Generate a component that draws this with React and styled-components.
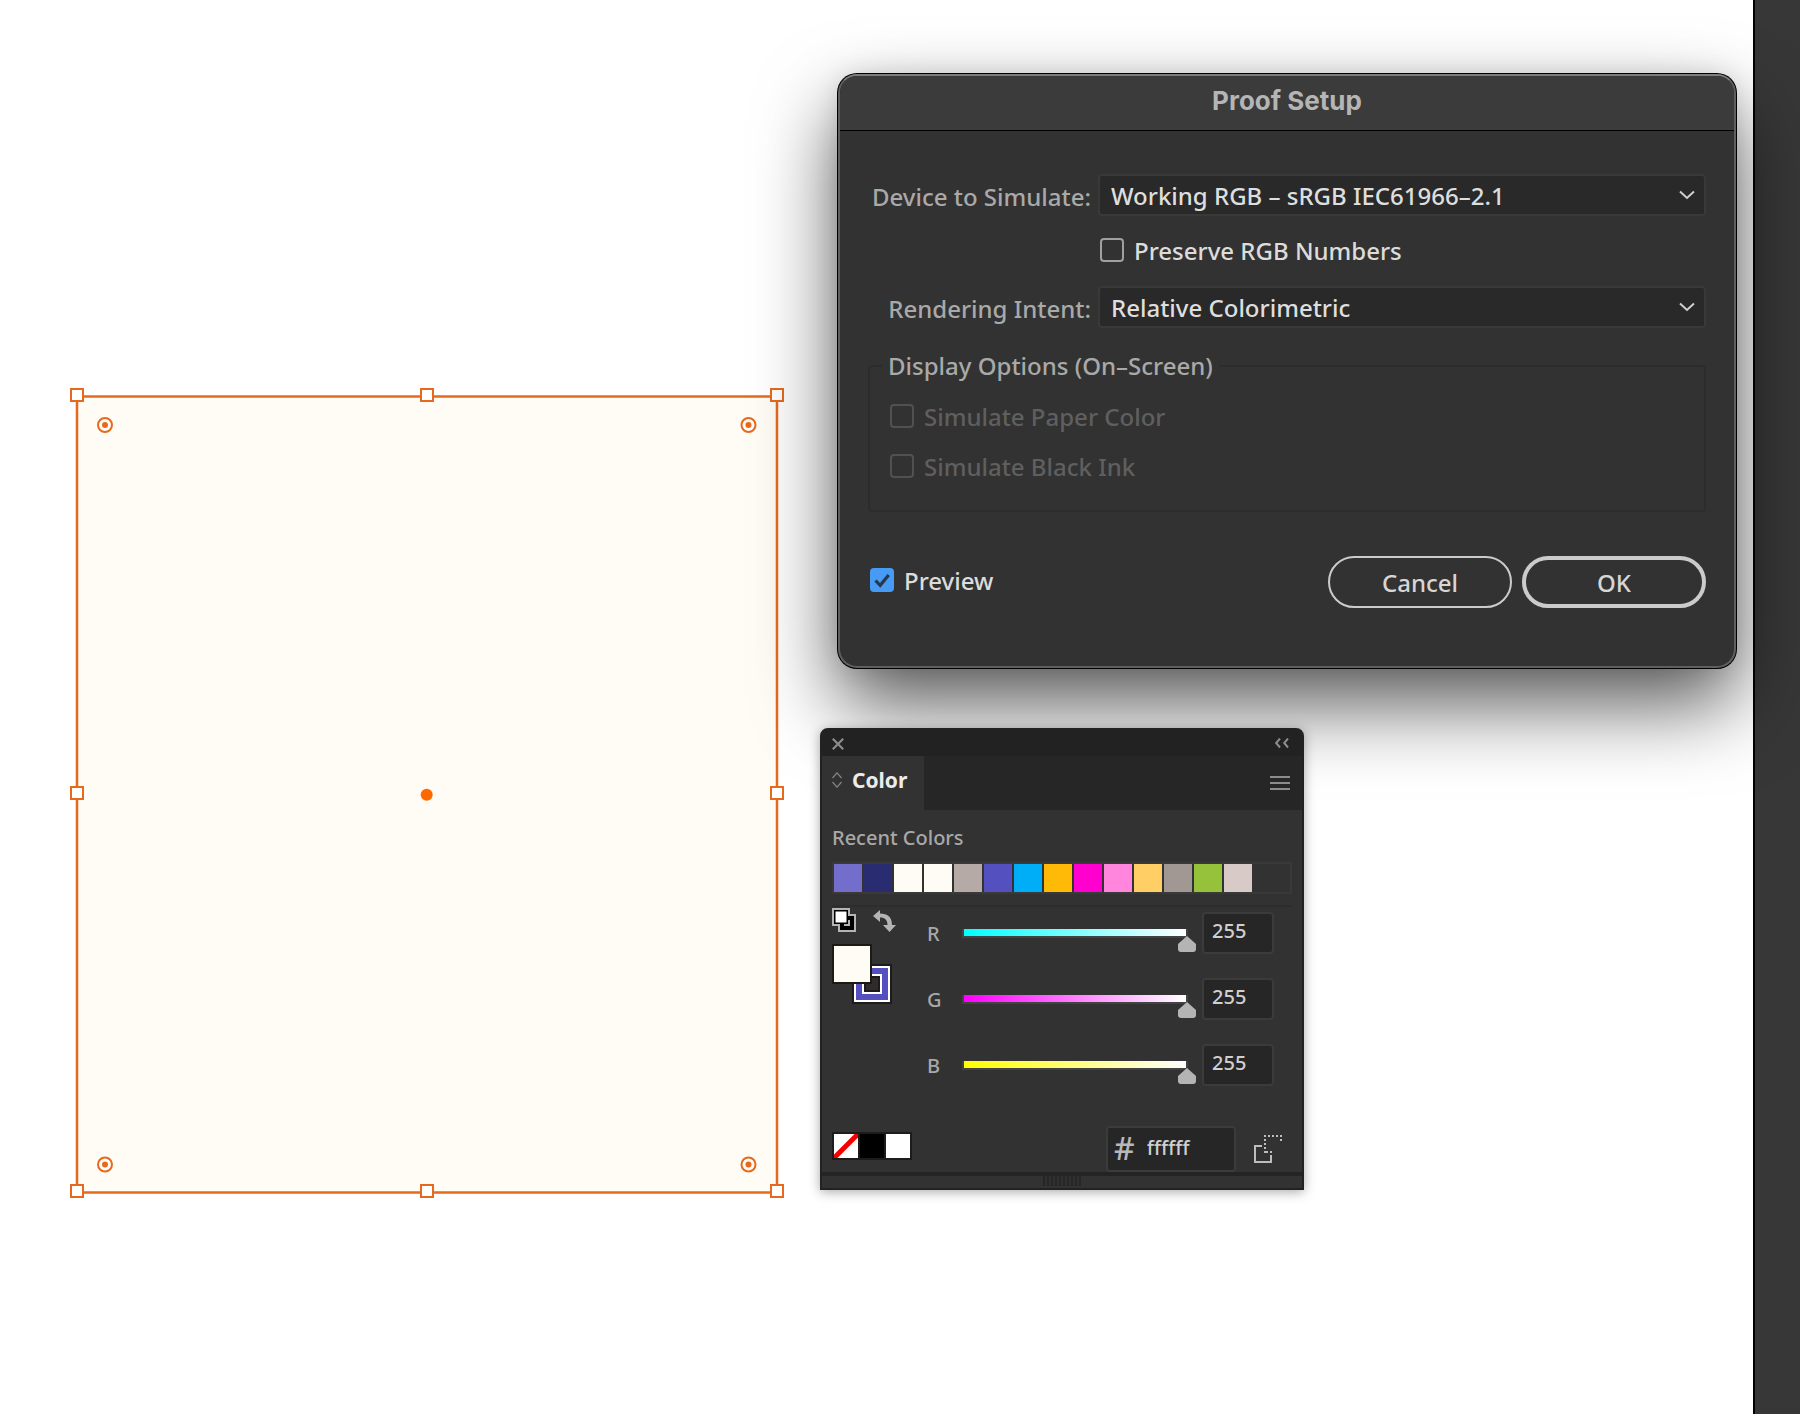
import React, { useState } from "react";
import styled, { createGlobalStyle, css } from "styled-components";

const GlobalStyle = createGlobalStyle`
  *, *::before, *::after { box-sizing: border-box; }
  body {
    margin: 0;
    background: #fff;
    font-family: "Noto Sans", "Open Sans", "Liberation Sans", sans-serif;
  }
  button, input, select, fieldset, legend { font: inherit; margin: 0; }
`;

const Workspace = styled.main`
  position: relative;
  display: flex;
  min-height: 100vh;
  overflow: hidden;
`;

const Artboard = styled.section`
  flex: 1;
  background: #fff;
`;

const DockEdge = styled.aside`
  width: 47px;
  background: #373737;
  border-left: 2px solid #000;
`;

const Selection = styled.svg`
  position: absolute;
  left: 70px;
  top: 388px;
  display: block;
`;

/* ---------- Proof Setup dialog ---------- */

const Dialog = styled.form`
  position: absolute;
  left: 838px;
  top: 74px;
  width: 898px;
  border: 2px solid #5f5f5f;
  border-top-color: #7d7d7d;
  border-radius: 19px;
  background: #323232;
  box-shadow: 0 0 0 1px #000, 0 36px 80px rgba(0, 0, 0, 0.66), 0 0 24px rgba(0, 0, 0, 0.1);
  font-size: 24px;
  font-weight: 500;
  line-height: 34px;
  color: #dcdcdc;
`;

const DialogTitle = styled.h1`
  margin: 0;
  height: 55px;
  padding-bottom: 5px;
  display: flex;
  align-items: center;
  justify-content: center;
  border-bottom: 1px solid #000;
  border-radius: 17px 17px 0 0;
  background: #3b3b3b;
  color: #b5b5b5;
  font: 700 26px/30px Inter, "Liberation Sans", sans-serif;
`;

const DialogBody = styled.div`
  padding: 43px 28px 58px 28px;
`;

const FormGrid = styled.div`
  display: grid;
  grid-template-columns: 223px 1fr;
  column-gap: 7px;
  row-gap: 22px;
  align-items: center;
`;

const FieldLabel = styled.label`
  padding-top: 3px;
  text-align: right;
  color: #a9a9a9;
  white-space: nowrap;
`;

const SelectWrap = styled.div`
  position: relative;
  display: grid;

  svg {
    position: absolute;
    right: 11px;
    top: 15px;
    pointer-events: none;
  }
`;

const Select = styled.select`
  appearance: none;
  width: 100%;
  height: 42px;
  padding: 1px 40px 0 11px;
  border: 2px solid #393939;
  border-radius: 4px;
  background: #292929;
  color: #dedede;
  line-height: 34px;
`;

const CheckLabel = styled.label`
  display: flex;
  align-items: center;
  gap: 10px;
  height: ${(p) => (p.$compact ? "26px" : "34px")};
  padding-left: 2px;
  ${(p) => p.$column && css`grid-column: ${p.$column};`}
  color: ${(p) => (p.$disabled ? "#5f5f5f" : "#dcdcdc")};
`;

const CheckInput = styled.input`
  appearance: none;
  flex: none;
  width: 24px;
  height: 24px;
  border: 2px solid #a0a0a0;
  border-radius: 4px;
  background: transparent;

  &:disabled { border-color: #515151; }
  &:checked {
    border-color: #479bf5;
    background: #479bf5;
  }
`;

const CheckBox = styled.span`
  position: relative;
  display: grid;
  margin-bottom: 2px;

  svg {
    position: absolute;
    inset: 0;
    pointer-events: none;
  }
`;

const OptionsGroup = styled.fieldset`
  min-width: 0;
  margin-top: 21px;
  padding: 17px 12px 26px;
  border: 2px solid #2c2c2c;
  border-radius: 4px;
`;

const OptionsLegend = styled.legend`
  padding: 0 6px;
  color: #a9a9a9;
`;

const OptionsList = styled.div`
  display: flex;
  flex-direction: column;
  gap: 16px;
  padding-left: 6px;
`;

const DialogFooter = styled.div`
  display: flex;
  align-items: center;
  justify-content: space-between;
  margin-top: 44px;

  > label { margin-bottom: 2px; }
`;

const ButtonRow = styled.div`
  display: flex;
  gap: 10px;
`;

const PillButton = styled.button`
  width: 184px;
  height: 52px;
  padding: 2px 0 0;
  border: ${(p) => (p.$primary ? "4px" : "2px")} solid #cbcbcb;
  border-radius: 26px;
  background: transparent;
  color: #d6d6d6;
`;

/* ---------- Color panel ---------- */

const Panel = styled.section`
  position: absolute;
  left: 820px;
  top: 728px;
  width: 484px;
  border: 2px solid #222;
  border-radius: 8px 8px 0 0;
  background: #323232;
  box-shadow: 0 2px 12px rgba(0, 0, 0, 0.34);
  color: #b0b0b0;
  font-size: 20px;
  font-weight: 500;
  line-height: 28px;
`;

const PanelBar = styled.header`
  display: flex;
  align-items: center;
  justify-content: space-between;
  height: 26px;
  padding: 2px 13px 0 10px;
  border-radius: 6px 6px 0 0;
  background: #222;
`;

const IconButton = styled.button`
  display: grid;
  padding: 0;
  border: 0;
  background: none;
  color: ${(p) => p.$color || "#8c8c8c"};
`;

const TabStrip = styled.div`
  display: flex;
  align-items: center;
  justify-content: space-between;
  height: 54px;
  padding-right: 12px;
  background: #262626;
`;

const Tab = styled.button`
  display: flex;
  align-items: center;
  gap: 10px;
  align-self: stretch;
  width: 102px;
  padding: 0 0 6px 10px;
  border: 0;
  background: #323232;
  color: #ececec;
  font-size: 21px;
  font-weight: 700;
`;

const PanelBody = styled.div`
  padding: 14px 10px 0;
`;

const SectionTitle = styled.h2`
  margin: 0 0 10px;
  font-size: 20px;
  font-weight: 500;
  line-height: 28px;
  color: #a8a8a8;
`;

const SwatchStrip = styled.div`
  display: flex;
  gap: 2px;
  padding: 0;
  border: 2px solid #393939;
`;

const Swatch = styled.button`
  width: 28px;
  height: 28px;
  padding: 0;
  border: 0;
  background: ${(p) => p.$color};
`;

const Divider = styled.hr`
  height: 2px;
  margin: 11px 0 0;
  border: 0;
  background: #2d2d2d;
`;

const Mixer = styled.div`
  display: grid;
  grid-template-columns: 95px 1fr;
`;

const ToolColumn = styled.div`
  display: flex;
  flex-direction: column;
  gap: 12px;
  padding-top: 1px;
`;

const ToolRow = styled.div`
  display: flex;
  gap: 17px;
`;

const Channels = styled.div`
  display: flex;
  flex-direction: column;
  gap: 24px;
  padding: 5px 18px 0 0;
`;

const ChannelRow = styled.div`
  display: grid;
  grid-template-columns: 28px 1fr 72px;
  align-items: start;
  height: 42px;
`;

const ChannelLabel = styled.label`
  line-height: 44px;
  color: #a8a8a8;
`;

const ChannelRange = styled.input`
  appearance: none;
  width: calc(100% - 6px);
  height: 23px;
  margin-top: 17px;
  background:
    linear-gradient(90deg, ${(p) => p.$from}, #fff) 9px 0 / calc(100% - 19px) 7px no-repeat,
    linear-gradient(#424242, #424242) 7px 0 / calc(100% - 15px) 9px no-repeat;

  &::-webkit-slider-runnable-track {
    height: 23px;
    background: transparent;
  }
  &::-webkit-slider-thumb {
    appearance: none;
    width: 18px;
    height: 16px;
    margin-top: 7px;
    border-radius: 0 0 3px 3px;
    background: #b4b4b4;
    clip-path: polygon(50% 0, 100% 50%, 100% 100%, 0 100%, 0 50%);
  }
`;

const fieldBox = css`
  border: 2px solid #3b3b3b;
  border-radius: 4px;
  background: #262626;
  color: #cfcfcf;
`;

const ValueInput = styled.input`
  ${fieldBox}
  width: 72px;
  height: 42px;
  padding: 0 0 6px 8px;
`;

const PanelFooter = styled.div`
  display: flex;
  align-items: center;
  padding: 0 8px 0 0;
  margin-top: 40px;
`;

const QuickSwatches = styled.div`
  display: flex;
  gap: 2px;
  padding: 2px;
  margin-right: auto;
  margin-bottom: 6px;
  background: #1c1c1c;
`;

const QuickSwatch = styled.button`
  display: grid;
  width: 24px;
  height: 24px;
  padding: 0;
  border: 0;
  background: ${(p) => p.$color};
`;

const HexField = styled.label`
  ${fieldBox}
  display: flex;
  align-items: center;
  width: 130px;
  height: 46px;
  margin-right: 18px;
  padding-left: 6px;
  gap: 12px;
`;

const HexSign = styled.span`
  font-size: 32px;
  line-height: 42px;
  padding-bottom: 2px;
  color: #b8b8b8;
`;

const HexInput = styled.input`
  min-width: 0;
  flex: 1;
  padding: 0 0 2px;
  border: 0;
  background: transparent;
  color: #cfcfcf;
`;

const ResizeBar = styled.div`
  display: flex;
  justify-content: center;
  height: 16px;
  border-top: 4px solid #242424;
`;

const Grip = styled.span`
  width: 38px;
  height: 10px;
  background: repeating-linear-gradient(90deg, #262626 0 2px, #303030 2px 4px);
`;

const ORANGE = "#e66a1e";

function SelectionOutline() {
  const xs = [7, 357, 707];
  const ys = [7, 405, 803];
  return (
    <Selection width="714" height="811" viewBox="0 0 714 811" aria-label="Selected rectangle">
      <rect x="7" y="8.5" width="700" height="796" fill="#fffcf5" stroke={ORANGE} strokeWidth="2.5" />
      {xs.map((x) =>
        ys.map((y) =>
          x === 357 && y === 405 ? null : (
            <rect key={`${x}-${y}`} x={x - 6} y={y - 6} width="12" height="12" fill="#fff" stroke={ORANGE} strokeWidth="2" />
          )
        )
      )}
      {[35, 678.5].map((x) =>
        [37, 776.5].map((y) => (
          <g key={`${x}-${y}`}>
            <circle cx={x} cy={y} r="7" fill="#fffcf5" stroke={ORANGE} strokeWidth="2" />
            <circle cx={x} cy={y} r="3" fill={ORANGE} />
          </g>
        ))
      )}
      <circle cx="356.7" cy="406.7" r="6" fill="#ff6800" />
    </Selection>
  );
}

function Dropdown({ id, options }) {
  return (
    <SelectWrap>
      <Select id={id}>
        {options.map((o) => (
          <option key={o}>{o}</option>
        ))}
      </Select>
      <svg width="16" height="12" viewBox="0 0 16 12" fill="none" stroke="#cfcfcf" strokeWidth="2">
        <path d="M1 2.5 8 9l7-6.5" />
      </svg>
    </SelectWrap>
  );
}

function Check({ label, disabled, compact, column, initial = false }) {
  const [on, setOn] = useState(initial);
  return (
    <CheckLabel $disabled={disabled} $compact={compact} $column={column}>
      <CheckBox>
        <CheckInput type="checkbox" checked={on} disabled={disabled} onChange={() => setOn(!on)} />
        {on && (
          <svg width="24" height="24" viewBox="0 0 24 24" fill="none" stroke="#283848" strokeWidth="3.2">
            <path d="m5.5 12.5 4.7 4.8L18.7 7" />
          </svg>
        )}
      </CheckBox>
      {label}
    </CheckLabel>
  );
}

function ProofSetup() {
  return (
    <Dialog onSubmit={(e) => e.preventDefault()}>
      <DialogTitle>Proof Setup</DialogTitle>
      <DialogBody>
        <FormGrid>
          <FieldLabel htmlFor="device">Device to Simulate:</FieldLabel>
          <Dropdown id="device" options={["Working RGB – sRGB IEC61966–2.1"]} />
          <Check label="Preserve RGB Numbers" compact column={2} />
          <FieldLabel htmlFor="intent">Rendering Intent:</FieldLabel>
          <Dropdown id="intent" options={["Relative Colorimetric"]} />
        </FormGrid>
        <OptionsGroup>
          <OptionsLegend>Display Options (On–Screen)</OptionsLegend>
          <OptionsList>
            <Check label="Simulate Paper Color" disabled />
            <Check label="Simulate Black Ink" disabled />
          </OptionsList>
        </OptionsGroup>
        <DialogFooter>
          <Check label="Preview" initial />
          <ButtonRow>
            <PillButton type="button">Cancel</PillButton>
            <PillButton type="submit" $primary>OK</PillButton>
          </ButtonRow>
        </DialogFooter>
      </DialogBody>
    </Dialog>
  );
}

const RECENT = [
  "#736dcb", "#292c70", "#fffcf5", "#fffcf5", "#b5aaa5", "#5450bf", "#00aef8",
  "#ffba08", "#ff00cf", "#ff86dc", "#ffcf66", "#a19793", "#95c23a", "#d8cac6",
];

const CHANNELS = [
  { name: "R", from: "#00ffff" },
  { name: "G", from: "#ff00ff" },
  { name: "B", from: "#ffff00" },
];

function Channel({ name, from }) {
  const [value, setValue] = useState(255);
  const update = (e) => setValue(e.target.value);
  return (
    <ChannelRow>
      <ChannelLabel htmlFor={`range-${name}`}>{name}</ChannelLabel>
      <ChannelRange id={`range-${name}`} type="range" min="0" max="255" value={value} onChange={update} $from={from} />
      <ValueInput aria-label={`${name} value`} value={value} onChange={update} />
    </ChannelRow>
  );
}

function ColorPanel() {
  const [hex, setHex] = useState("ffffff");
  return (
    <Panel>
      <PanelBar>
        <IconButton aria-label="Close">
          <svg width="12" height="12" viewBox="0 0 12 12" stroke="currentColor" strokeWidth="2.2">
            <path d="m.8.8 10.4 10.4M11.2.8.8 11.2" />
          </svg>
        </IconButton>
        <IconButton aria-label="Collapse">
          <svg width="14" height="12" viewBox="0 0 14 12" fill="none" stroke="currentColor" strokeWidth="2">
            <path d="M5 .5 1.2 5 5 9.500M13 .5 9.200 5 13 9.500" />
          </svg>
        </IconButton>
      </PanelBar>
      <TabStrip>
        <Tab>
          <svg width="10" height="16" viewBox="0 0 10 16" fill="none" stroke="#858585" strokeWidth="1.2">
            <path d="M.5 6 5 .8 9.5 6M.5 10 5 15.2 9.5 10" />
          </svg>
          Color
        </Tab>
        <IconButton aria-label="Panel menu">
          <svg width="20" height="14" viewBox="0 0 20 14" fill="currentColor">
            <path d="M0 0h20v2H0zM0 6h20v2H0zM0 12h20v2H0z" />
          </svg>
        </IconButton>
      </TabStrip>
      <PanelBody>
        <SectionTitle>Recent Colors</SectionTitle>
        <SwatchStrip>
          {RECENT.map((c, i) => (
            <Swatch key={i} $color={c} aria-label={c} />
          ))}
        </SwatchStrip>
        <Divider />
        <Mixer>
          <ToolColumn>
            <ToolRow>
              <IconButton aria-label="Default fill and stroke">
                <svg width="24" height="24" viewBox="0 0 24 24">
                  <path d="M0 0h18v18H0z" fill="#b4b4b4" />
                  <path d="M6 6h18v18H6z" fill="#b4b4b4" />
                  <path d="M8 8h14v14H8z" fill="#000" />
                  <path d="M12 17h5v-5" fill="none" stroke="#b4b4b4" strokeWidth="2" />
                  <path d="M2 2h14v14H2z" fill="#000" />
                  <path d="M3.5 3.5h11v11h-11z" fill="#fff" />
                </svg>
              </IconButton>
              <IconButton aria-label="Swap fill and stroke" $color="#b4b4b4">
                <svg width="23" height="24" viewBox="0 0 23 24" fill="currentColor">
                  <path d="M0 8 7 2v3.500C14.500 5.500 19 9 19 17h4l-6.500 7L10 17h4.500c0-5-2.500-7.500-7.500-7.500V14z" />
                </svg>
              </IconButton>
            </ToolRow>
            <IconButton aria-label="Fill and stroke">
              <svg width="60" height="60" viewBox="0 0 60 60">
                <path d="M20 20h40v40H20z" fill="#1c1a1a" />
                <path d="M22 22h36v36H22z" fill="#fff" />
                <path d="M24 24h32v32H24z" fill="#5450bf" />
                <path d="M30 30h20v20H30z" fill="#fff" />
                <path d="M32 32h16v16H32z" fill="#1c1a1a" />
                <path d="M34 34h12v12H34z" fill="#302a28" />
                <path d="M0 0h40v40H0z" fill="#1c1a16" />
                <path d="M2 2h36v36H2z" fill="#fffcf5" />
              </svg>
            </IconButton>
          </ToolColumn>
          <Channels>
            {CHANNELS.map((c) => (
              <Channel key={c.name} {...c} />
            ))}
          </Channels>
        </Mixer>
        <PanelFooter>
          <QuickSwatches>
            <QuickSwatch $color="#fff" aria-label="None">
              <svg width="24" height="24" viewBox="0 0 24 24">
                <path d="M0 24v-3.500L20.500 0H24v3.500L3.500 24z" fill="#f40000" />
              </svg>
            </QuickSwatch>
            <QuickSwatch $color="#000" aria-label="Black" />
            <QuickSwatch $color="#fff" aria-label="White" />
          </QuickSwatches>
          <HexField>
            <HexSign>#</HexSign>
            <HexInput value={hex} onChange={(e) => setHex(e.target.value)} />
          </HexField>
          <IconButton aria-label="Out of gamut" $color="#bdbdbd">
            <svg width="30" height="28" viewBox="0 0 30 28" fill="none" stroke="currentColor" strokeWidth="2">
              <path d="M8 11H1v16h16v-7" />
              <path d="M10 1h18" strokeDasharray="2 2" />
              <path d="M11 4v14" strokeDasharray="2 2" />
              <path d="M27 4v2M12 17h6" strokeDasharray="2 2" />
            </svg>
          </IconButton>
        </PanelFooter>
      </PanelBody>
      <ResizeBar>
        <Grip />
      </ResizeBar>
    </Panel>
  );
}

export default function App() {
  return (
    <>
      <GlobalStyle />
      <Workspace>
        <Artboard>
          <SelectionOutline />
        </Artboard>
        <DockEdge />
        <ProofSetup />
        <ColorPanel />
      </Workspace>
    </>
  );
}
